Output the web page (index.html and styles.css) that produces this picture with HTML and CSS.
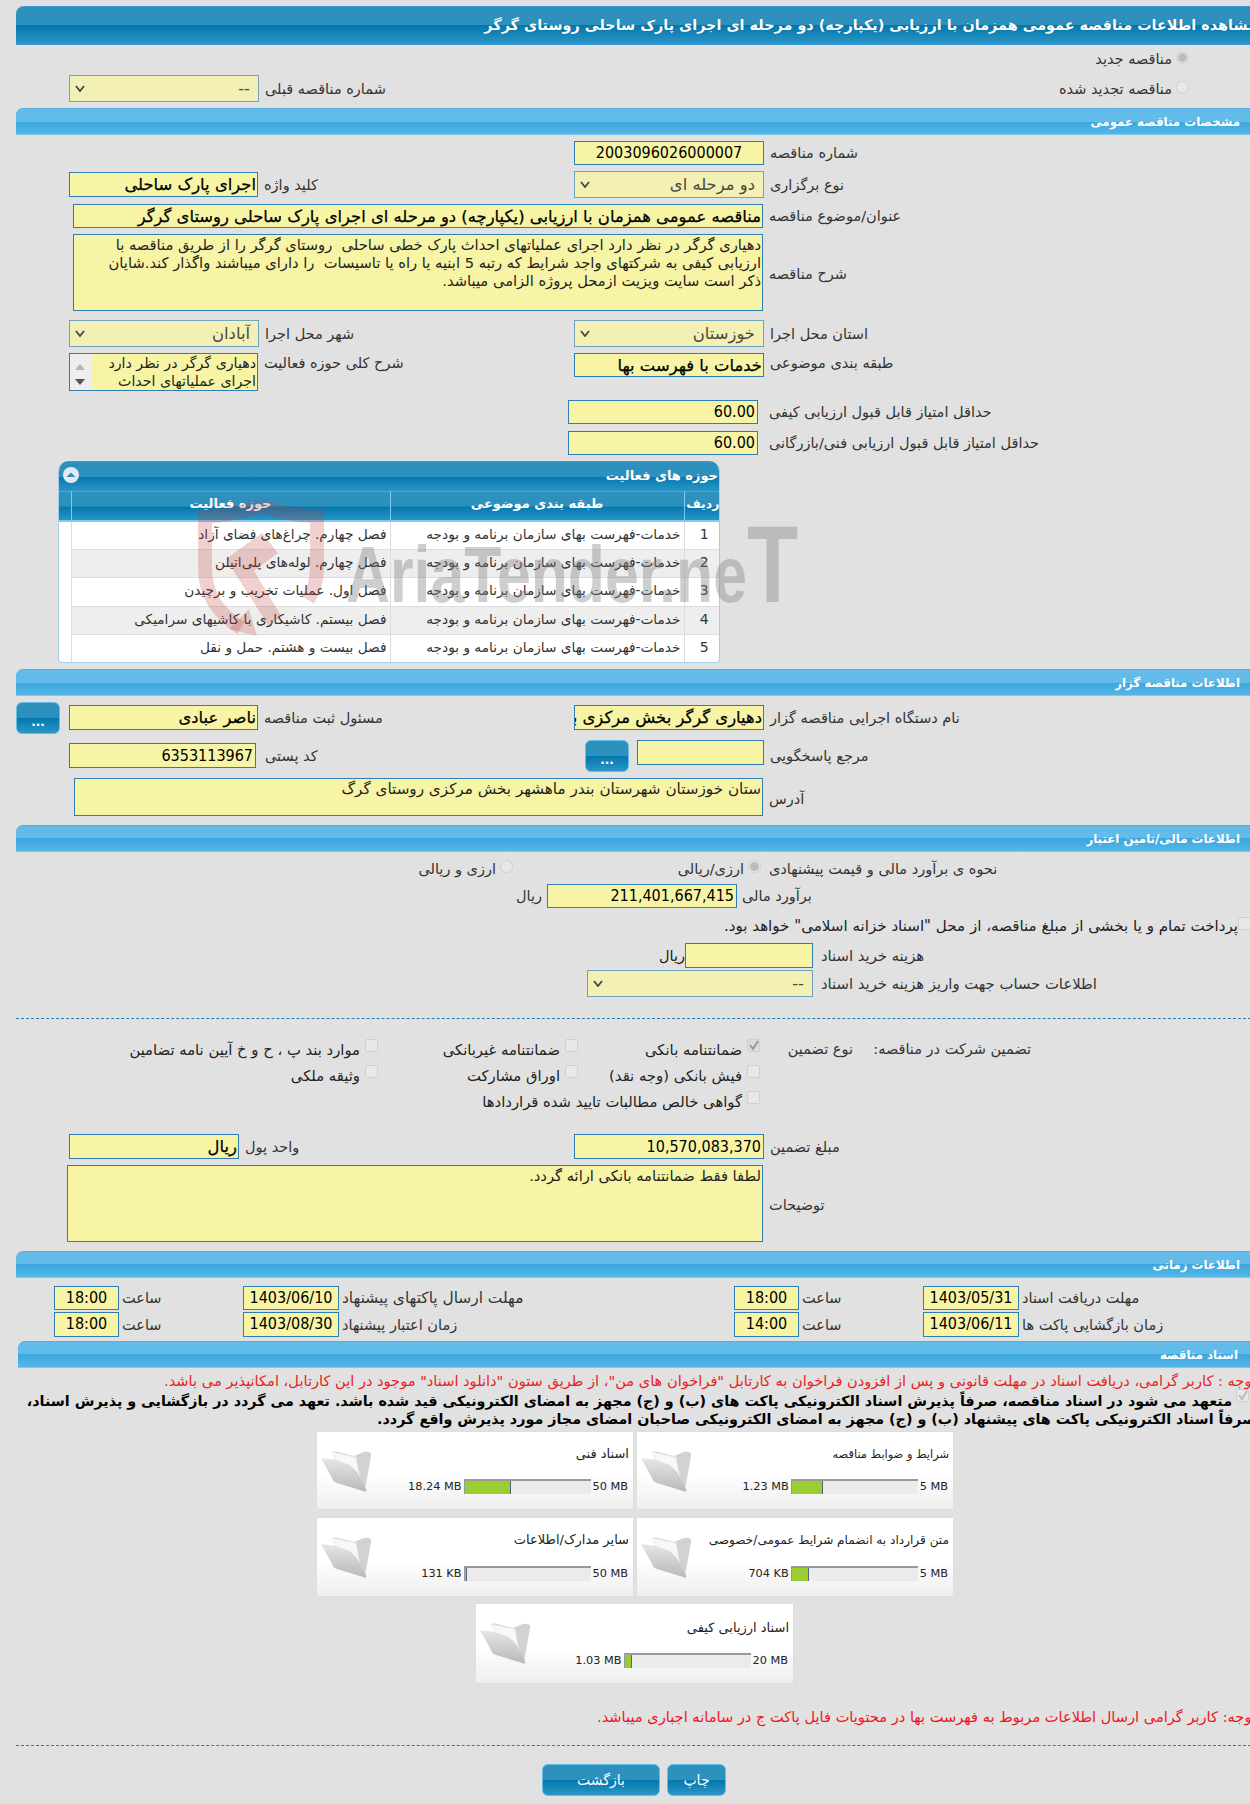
FILE: index.html
```html
<!DOCTYPE html>
<html lang="fa">
<head>
<meta charset="utf-8">
<title>مشاهده اطلاعات مناقصه</title>
<link rel="stylesheet" href="styles.css">
</head>
<body>
<div class="page">
  <div class="title-bar">مشاهده اطلاعات مناقصه عمومی همزمان با ارزیابی (یکپارچه) دو مرحله ای اجرای پارک ساحلی روستای گرگر</div>

  <div class="row h28">
    <div class="col-l"></div>
    <div class="col-r radio-line"><span class="radio on"></span><span class="lbl">مناقصه جدید</span></div>
  </div>
  <div class="row h27 mt2">
    <div class="col-l"><div class="select w190"><i class="chev"><svg viewBox="0 0 10 7" width="10" height="7"><path d="M1 1l4 5 4-5" fill="none" stroke="#444" stroke-width="1.8"/></svg></i><span>--</span></div><span class="lbl">شماره مناقصه قبلی</span></div>
    <div class="col-r radio-line"><span class="radio"></span><span class="lbl">مناقصه تجدید شده</span></div>
  </div>

  <div class="section mt6">مشخصات مناقصه عمومی</div>

  <div class="row h24 mt6">
    <div class="col-l"></div>
    <div class="col-r"><div class="field w190 num center">2003096026000007</div><span class="lbl">شماره مناقصه</span></div>
  </div>
  <div class="row h27 mt6">
    <div class="col-l"><div class="field w189 h25 big">اجرای پارک ساحلی</div><span class="lbl">کلید واژه</span></div>
    <div class="col-r"><div class="select w190"><i class="chev"><svg viewBox="0 0 10 7" width="10" height="7"><path d="M1 1l4 5 4-5" fill="none" stroke="#444" stroke-width="1.8"/></svg></i><span>دو مرحله ای</span></div><span class="lbl">نوع برگزاری</span></div>
  </div>
  <div class="row-wide h24 mt6 ml57">
    <div class="field w690 big">مناقصه عمومی همزمان با ارزیابی (یکپارچه) دو مرحله ای اجرای پارک ساحلی روستای گرگر</div><span class="lbl">عنوان/موضوع مناقصه</span>
  </div>
  <div class="row-wide h77 mt6 ml57">
    <div class="field area w690">دهیاری گرگر در نظر دارد اجرای عملیاتهای احداث پارک خطی ساحلی&nbsp; روستای گرگر را از طریق مناقصه با<br>ارزیابی کیفی به شرکتهای واجد شرایط که رتبه 5 ابنیه یا راه یا تاسیسات&nbsp; را دارای میباشند واگذار کند.شایان<br>ذکر است سایت ویزیت ازمحل پروژه الزامی میباشد.</div><span class="lbl">شرح مناقصه</span>
  </div>
  <div class="row h27 mt9">
    <div class="col-l"><div class="select w190"><i class="chev"><svg viewBox="0 0 10 7" width="10" height="7"><path d="M1 1l4 5 4-5" fill="none" stroke="#444" stroke-width="1.8"/></svg></i><span>آبادان</span></div><span class="lbl">شهر محل اجرا</span></div>
    <div class="col-r"><div class="select w190"><i class="chev"><svg viewBox="0 0 10 7" width="10" height="7"><path d="M1 1l4 5 4-5" fill="none" stroke="#444" stroke-width="1.8"/></svg></i><span>خوزستان</span></div><span class="lbl">استان محل اجرا</span></div>
  </div>
  <div class="row h38 mt6 top">
    <div class="col-l top"><div class="scrollbox w189"><div class="scroll-bar"><i class="up"></i><i class="down"></i></div><div class="scroll-text">دهیاری گرگر در نظر دارد اجرای عملیاتهای احداث</div></div><span class="lbl up4">شرح کلی حوزه فعالیت</span></div>
    <div class="col-r top"><div class="field w190 big">خدمات با فهرست بها</div><span class="lbl up4">طبقه بندی موضوعی</span></div>
  </div>
  <div class="row h24 mt9 left-shift">
    <div class="col-l"></div>
    <div class="col-r"><div class="field w190 num">60.00</div><span class="lbl gap11">حداقل امتیاز قابل قبول ارزیابی کیفی</span></div>
  </div>
  <div class="row h25 mt6 left-shift">
    <div class="col-l"></div>
    <div class="col-r"><div class="field w190 num">60.00</div><span class="lbl gap11">حداقل امتیاز قابل قبول ارزیابی فنی/بازرگانی</span></div>
  </div>

  <div class="panel">
    <div class="panel-head"><span class="collapse"><svg viewBox="0 0 16 16" width="16" height="16"><circle cx="8" cy="8" r="8" fill="#dfeaf1"/><path d="M3.5 10L8 5.500l4.500 4.500z" fill="#2e8fbd"/></svg></span><span>حوزه های فعالیت</span></div>
    <table class="grid">
      <thead><tr><th class="c-idx">ردیف</th><th class="c-cat">طبقه بندی موضوعی</th><th class="c-act">حوزه فعالیت</th><th class="c-end"></th></tr></thead>
      <tbody>
        <tr><td class="c-idx">1</td><td>خدمات-فهرست بهای سازمان برنامه و بودجه</td><td>فصل چهارم. چراغ‌های فضای آزاد</td><td class="c-end"></td></tr>
        <tr><td class="c-idx">2</td><td>خدمات-فهرست بهای سازمان برنامه و بودجه</td><td>فصل چهارم. لوله‌های پلی‌اتیلن</td><td class="c-end"></td></tr>
        <tr><td class="c-idx">3</td><td>خدمات-فهرست بهای سازمان برنامه و بودجه</td><td>فصل اول. عملیات تخریب و برچیدن</td><td class="c-end"></td></tr>
        <tr><td class="c-idx">4</td><td>خدمات-فهرست بهای سازمان برنامه و بودجه</td><td>فصل بیستم. کاشیکاری با کاشیهای سرامیکی</td><td class="c-end"></td></tr>
        <tr><td class="c-idx">5</td><td>خدمات-فهرست بهای سازمان برنامه و بودجه</td><td>فصل بیست و هشتم. حمل و نقل</td><td class="c-end"></td></tr>
      </tbody>
    </table>
  </div>

  <div class="section mt6">اطلاعات مناقصه گزار</div>

  <div class="row h32 mt6 top">
    <div class="col-l flush top"><button class="btn dots">...</button><div class="field w189 h25 big mt3">ناصر عبادی</div><span class="lbl low">مسئول ثبت مناقصه</span></div>
    <div class="col-r top"><div class="field w190 h25 big mt3">دهیاری گرگر بخش مرکزی بندر ماهشهر</div><span class="lbl low">نام دستگاه اجرایی مناقصه گزار</span></div>
  </div>
  <div class="row h32 mt6 top">
    <div class="col-l top"><div class="field w187 h25 num mt3">6353113967</div><span class="lbl low gap10">کد پستی</span></div>
    <div class="col-r top shift-ref"><button class="btn dots">...</button><div class="field w127 h25"></div><span class="lbl low">مرجع پاسخگویی</span></div>
  </div>
  <div class="row-wide h38 mt6 ml58">
    <div class="field area addr w689">ستان خوزستان شهرستان بندر ماهشهر بخش مرکزی روستای گرگ</div><span class="lbl">آدرس</span>
  </div>

  <div class="section mt9">اطلاعات مالی/تامین اعتبار</div>

  <div class="tri h22 mt6">
    <span class="opt"><span class="lbl">ارزی و ریالی</span><span class="radio"></span></span>
    <span class="opt"><span class="lbl">ارزی/ریالی</span><span class="radio on"></span></span>
    <span class="lbl">نحوه ی برآورد مالی و قیمت پیشنهادی</span>
  </div>
  <div class="line h24 mt4">
    <div class="lead lead-531"><span class="lbl">ریال</span></div>
    <div class="field w190 num">211,401,667,415</div>
    <span class="lbl gap5">برآورد مالی</span>
  </div>
  <div class="treasury h24 mt6">
    <span class="check"></span><span class="lbl dark">پرداخت تمام و یا بخشی از مبلغ مناقصه، از محل "اسناد خزانه اسلامی" خواهد بود.</span>
  </div>
  <div class="line h25 mt5">
    <div class="lead lead-669"><span class="lbl dark">ریال</span></div>
    <div class="field w128 h25"></div>
    <span class="lbl gap8">هزینه خرید اسناد</span>
  </div>
  <div class="line h26 mt2">
    <div class="lead lead-571"></div>
    <div class="select w227"><i class="chev"><svg viewBox="0 0 10 7" width="10" height="7"><path d="M1 1l4 5 4-5" fill="none" stroke="#444" stroke-width="1.8"/></svg></i><span>--</span></div>
    <span class="lbl gap8">اطلاعات حساب جهت واریز هزینه خرید اسناد</span>
  </div>

  <div class="divider mt22"></div>

  <div class="guar first">
    <span class="lbl">تضمین شرکت در مناقصه:</span>
    <span class="lbl">نوع تضمین</span>
    <span class="item"><span class="check on"><svg viewBox="0 0 12 12" width="12" height="12"><path d="M2 6l3 4 5-8" fill="none" stroke="#9a9a9a" stroke-width="2"/></svg></span><span class="lbl dark">ضمانتنامه بانکی</span></span>
    <span class="item"><span class="check"></span><span class="lbl dark">ضمانتنامه غیربانکی</span></span>
    <span class="item"><span class="check"></span><span class="lbl dark">موارد بند پ ، ح و خ آیین نامه تضامین</span></span>
  </div>
  <div class="guar">
    <span></span><span></span>
    <span class="item"><span class="check"></span><span class="lbl dark">فیش بانکی (وجه نقد)</span></span>
    <span class="item"><span class="check"></span><span class="lbl dark">اوراق مشارکت</span></span>
    <span class="item"><span class="check"></span><span class="lbl dark">وثیقه ملکی</span></span>
  </div>
  <div class="guar">
    <span></span><span></span>
    <span class="item wide"><span class="check"></span><span class="lbl dark">گواهی خالص مطالبات تایید شده قراردادها</span></span>
  </div>

  <div class="row h25 mt20">
    <div class="col-l"><div class="field w170 h25 big">ریال</div><span class="lbl">واحد پول</span></div>
    <div class="col-r"><div class="field w190 h25 num">10,570,083,370</div><span class="lbl">مبلغ تضمین</span></div>
  </div>
  <div class="row-wide h77 mt6 ml51">
    <div class="field area w696">لطفا فقط ضمانتنامه بانکی ارائه گردد.</div><span class="lbl">توضیحات</span>
  </div>

  <div class="section mt9">اطلاعات زمانی</div>

  <div class="times mt8">
    <span class="field num center">18:00</span><span class="lbl">ساعت</span>
    <span class="field num center">1403/06/10</span><span class="lbl fs15">مهلت ارسال پاکتهای پیشنهاد</span>
    <span class="field num center">18:00</span><span class="lbl">ساعت</span>
    <span class="field num center">1403/05/31</span><span class="lbl">مهلت دریافت اسناد</span>
  </div>
  <div class="times mt2">
    <span class="field num center">18:00</span><span class="lbl">ساعت</span>
    <span class="field num center">1403/08/30</span><span class="lbl">زمان اعتبار پیشنهاد</span>
    <span class="field num center">14:00</span><span class="lbl">ساعت</span>
    <span class="field num center">1403/06/11</span><span class="lbl">زمان بازگشایی پاکت ها</span>
  </div>

  <div class="section docs mt4 ml2">اسناد مناقصه</div>

  <p class="note red1">توجه : کاربر گرامی، دریافت اسناد در مهلت قانونی و پس از افزودن فراخوان به کارتابل "فراخوان های من"، از طریق ستون "دانلود اسناد" موجود در این کارتابل، امکانپذیر می باشد.</p>
  <div class="pledge"><span class="check pledge-check"><svg viewBox="0 0 12 12" width="12" height="12"><path d="M2 6l3 4 5-8" fill="none" stroke="#bbb" stroke-width="2"/></svg></span>متعهد می شود در اسناد مناقصه، صرفاً پذیرش اسناد الکترونیکی پاکت های (ب) و (ج) مجهز به امضای الکترونیکی قید شده باشد. تعهد می گردد در بازگشایی و پذیرش اسناد،<br>صرفاً اسناد الکترونیکی پاکت های پیشنهاد (ب) و (ج) مجهز به امضای الکترونیکی صاحبان امضای مجاز مورد پذیرش واقع گردد.</div>

  <div class="cards r1">
    <div class="card"><svg class="folder" viewBox="0 0 52 46"><use href="#folder"/></svg><div class="c-body"><div class="c-title">اسناد فنی</div><div class="c-bar"><span class="c-max">50 MB</span><span class="track"><i class="fill" style="width:37%"></i></span><span class="c-val">18.24 MB</span></div></div></div>
    <div class="card"><svg class="folder" viewBox="0 0 52 46"><use href="#folder"/></svg><div class="c-body"><div class="c-title tight">شرایط و ضوابط مناقصه</div><div class="c-bar"><span class="c-max">5 MB</span><span class="track"><i class="fill" style="width:25%"></i></span><span class="c-val">1.23 MB</span></div></div></div>
  </div>
  <div class="cards r2">
    <div class="card"><svg class="folder" viewBox="0 0 52 46"><use href="#folder"/></svg><div class="c-body"><div class="c-title">سایر مدارک/اطلاعات</div><div class="c-bar"><span class="c-max">50 MB</span><span class="track"><i class="fill" style="width:2%"></i></span><span class="c-val">131 KB</span></div></div></div>
    <div class="card"><svg class="folder" viewBox="0 0 52 46"><use href="#folder"/></svg><div class="c-body"><div class="c-title snug">متن قرارداد به انضمام شرایط عمومی/خصوصی</div><div class="c-bar"><span class="c-max">5 MB</span><span class="track"><i class="fill" style="width:14%"></i></span><span class="c-val">704 KB</span></div></div></div>
  </div>
  <div class="cards r3">
    <div class="card"><svg class="folder" viewBox="0 0 52 46"><use href="#folder"/></svg><div class="c-body"><div class="c-title">اسناد ارزیابی کیفی</div><div class="c-bar"><span class="c-max">20 MB</span><span class="track"><i class="fill" style="width:6%"></i></span><span class="c-val">1.03 MB</span></div></div></div>
  </div>

  <p class="note red2">توجه: کاربر گرامی ارسال اطلاعات مربوط به فهرست بها در محتویات فایل پاکت ج در سامانه اجباری میباشد.</p>

  <div class="divider end"></div>

  <div class="actions">
    <button class="btn action back">بازگشت</button>
    <button class="btn action print">چاپ</button>
  </div>
</div>

<div class="watermark">
  <svg class="wm-shield" viewBox="0 0 130 150">
    <path d="M65 9C45 16 25 19 9 19v52c0 28 14 46 36 60M65 9c20 7 40 10 56 10v52c0 12-3 22-9 32" fill="none" stroke="#c43a3a" stroke-opacity=".24" stroke-width="14"/>
    <path d="M30 62L66 36l16 20-24 18 28 46-14 8zM33 132l28 7-8-27z" fill="#c43a3a" fill-opacity=".24"/>
  </svg>
  <span class="wm-text">AriaTender.ne<b>T</b></span>
</div>

<svg class="defs" width="0" height="0" aria-hidden="true">
  <defs>
    <linearGradient id="fg" x1="0" y1="0" x2="0" y2="1"><stop offset="0" stop-color="#e6e6e6"/><stop offset="1" stop-color="#b9b9b9"/></linearGradient>
    <g id="folder">
      <path d="M14 3L34 8l10-4c4-1 8 0 7 4L45 42z" fill="#d2d2d2"/>
      <path d="M12 4l24 5 4 21-20-10z" fill="#f8f8f8" stroke="#e2e2e2" stroke-width=".7"/>
      <path d="M1 10l15 2 14 5 7 7 9 17c1 3-1 3-3 2L17 35c-3-1-4-2-5-5z" fill="url(#fg)"/>
    </g>
  </defs>
</svg>
</body>
</html>
```
FILE: styles.css
```css
* { box-sizing: border-box; }
html, body { margin: 0; padding: 0; }
body {
  position: relative;
  width: 1250px;
  height: 1804px;
  overflow: hidden;
  background: #e1e1e1;
  font-family: "DejaVu Sans", sans-serif;
  font-size: 14.5px;
  color: #333;
}
.page { width: 1244px; margin-left: 16px; padding-top: 6px; }

.mt2 { margin-top: 2px; } .mt3 { margin-top: 3px; } .mt4 { margin-top: 4px; } .mt5 { margin-top: 5px; }
.mt6 { margin-top: 6px; } .mt8 { margin-top: 8px; } .mt9 { margin-top: 9px; } .mt20 { margin-top: 20px; } .mt22 { margin-top: 22px; }
.ml2 { margin-left: 2px; }
.h22 { height: 22px; } .h24 { height: 24px; } .h25 { height: 25px; } .h26 { height: 26px; } .h27 { height: 27px; }
.h28 { height: 28px; } .h32 { height: 32px; } .h38 { height: 38px; } .h77 { height: 77px; }

.title-bar {
  height: 39px;
  line-height: 36px;
  padding-right: 3px;
  direction: rtl;
  white-space: nowrap;
  color: #fff;
  font-size: 14.4px;
  font-weight: bold;
  border-top: 1px solid #3c98dd;
  border-bottom: 1px solid #3c98dd;
  border-top-left-radius: 8px;
  background: linear-gradient(#2e90bd 0, #2e90bd 50%, #0277ae 50%, #2c96c5 100%);
  text-shadow: 0 0 1px #0a5f88;
}
.section {
  height: 27px;
  line-height: 26px;
  padding-right: 20px;
  direction: rtl;
  white-space: nowrap;
  color: #fff;
  font-size: 11.8px;
  font-weight: bold;
  border-top: 1px solid #4fb0e6;
  border-bottom: 1px solid #7ccbf2;
  border-top-left-radius: 7px;
  background: linear-gradient(#62bbe9 0, #62bbe9 50%, #3ba7de 50%, #55b6e8 100%);
}
.section.docs { padding-right: 22px; }

.row { display: grid; grid-template-columns: 558px 1fr; align-items: center; }
.row.top { align-items: start; }
.row.left-shift .col-r { margin-left: -6px; }
.col-l, .col-r { display: flex; align-items: center; height: 100%; }
.col-l.top, .col-r.top { align-items: flex-start; }
.col-l { padding-left: 53px; }
.col-l.flush { padding-left: 0; }
.col-l.flush .btn { margin-right: 9px; }
.col-r.shift-ref { margin-left: 11px; }
.col-r.shift-ref .btn { margin-right: 8px; }
.radio-line { justify-content: flex-end; padding-right: 71px; }
.radio-line .lbl { margin: 0; order: 1; }
.radio-line .radio { order: 2; margin-left: 4px; margin-top: -3px; }

.row-wide { display: flex; align-items: center; }
.ml57 { margin-left: 57px; } .ml58 { margin-left: 58px; } .ml51 { margin-left: 51px; }
.field.area + .lbl { margin-top: 3px; }

.lbl { margin-left: 6px; white-space: nowrap; direction: rtl; color: #333; }
.lbl.dark { color: #222; }
.lbl.up4 { margin-top: 2px; }
.lbl.low { margin-top: 8px; }
.lbl.gap5 { margin-left: 5px; }
.lbl.gap8 { margin-left: 8px; font-size: 14.8px; }
.lbl.gap10 { margin-left: 9px; }
.lbl.gap11 { margin-left: 11px; }
.lbl.fs15 { font-size: 15.400px; }

.field {
  display: block;
  height: 24px;
  line-height: 22px;
  padding: 0 1px;
  direction: rtl;
  white-space: nowrap;
  overflow: hidden;
  background: #f7f5a5;
  border: 1px solid #2d7fb3;
  color: #000;
  flex: none;
}
.w127 { width: 127px; } .w128 { width: 128px; } .w170 { width: 170px; } .w187 { width: 187px; } .w189 { width: 189px; } .w190 { width: 190px; } .w227 { width: 226px; }
.w689 { width: 689px; } .w690 { width: 690px; } .w696 { width: 696px; }
.field.h25 { height: 25px; line-height: 23px; }
.field.num { font-family: "DejaVu Sans Condensed", "DejaVu Sans", sans-serif; font-size: 16px; text-align: right; direction: ltr; padding-right: 2px; }
.field.center { text-align: center; padding: 0; }
.field.big { font-size: 16.4px; line-height: 24px; -webkit-text-stroke: .25px #000; }
.field.area { height: 100%; white-space: normal; line-height: 18px; padding: 1px; color: #222; font-size: 14.7px; }
.field.addr { font-size: 15.2px; white-space: nowrap; }

.select {
  display: flex;
  justify-content: space-between;
  align-items: center;
  height: 27px;
  padding: 0 8px 0 5px;
  border: 1px solid #6fa3bd;
  background: #f2f0b5;
  color: #4a4a3a;
  font-size: 16.4px;
  flex: none;
}
.select span { direction: rtl; }
.chev { display: flex; font-style: normal; }

.radio, .check {
  display: inline-block;
  flex: none;
  width: 13px;
  height: 13px;
  background: #e8e8e8;
  border: 1px solid #cfcfcf;
}
.radio { border-radius: 50%; }
.radio.on { background: radial-gradient(circle, #bdbdbd 0 4px, #e8e8e8 5px); }
.check { border-radius: 2px; }
.check svg { display: block; margin: -1px; }
.check.on { background: #dcdcdc; }

.scrollbox { display: flex; height: 38px; border: 1px solid #2d7fb3; background: #f7f5a5; flex: none; overflow: hidden; }
.scroll-bar { position: relative; flex: none; width: 21px; background: #eee; }
.scroll-bar .up { position: absolute; left: 5px; top: 10px; border: 5px solid transparent; border-top: 0; border-bottom: 6px solid #b5b5b5; }
.scroll-bar .down { position: absolute; left: 5px; top: 25px; border: 5px solid transparent; border-bottom: 0; border-top: 6px solid #555; }
.scroll-text { flex: 1; direction: rtl; padding: 0 1px; font-size: 14.2px; line-height: 18px; color: #222; }

.panel { width: 662px; height: 202px; margin: 6px 0 0 42px; background: #fff; border: 1px solid #a8cde6; border-top: 0; border-radius: 10px 10px 4px 4px; overflow: hidden; }
.panel-head { display: flex; justify-content: space-between; align-items: center; height: 30px; padding: 0 1px 3px 4px; color: #fff; font-size: 13px; font-weight: bold; border-top: 1px solid #3c98dd; background: linear-gradient(#2e90bd 0, #2e90bd 50%, #0277ae 50%, #2c96c5 100%); }
.collapse { display: flex; }
.grid { width: 100%; height: 171px; border-collapse: collapse; direction: rtl; table-layout: fixed; }
.grid th { height: 29px; color: #fff; font-size: 13px; font-weight: bold; border-left: 1px solid #7ccbf2; border-top: 1px solid #4ba8dc; border-bottom: 2px solid #7ccbf2; background: linear-gradient(#2e90bd 0, #2e90bd 50%, #0277ae 50%, #2c96c5 100%); padding: 0 0 4px; }
.grid td { padding: 0 3px 3px; height: 28.500px; border-left: 1px solid #ddd; border-bottom: 1px solid #ddd; font-size: 13.7px; color: #333; white-space: nowrap; }
.grid tr:nth-child(even) td { background: #eee; }
.grid td.c-end, .grid th.c-end { border-left: 0; }
.grid tr:nth-child(even) td.c-end { background: #fff; }
.grid td.c-end { border-bottom: 0; }
.c-idx { width: 37px; text-align: center; }
.grid td.c-idx { text-align: center; font-size: 14px; padding: 0 0 3px 3px; }
.c-cat { width: 294px; } .c-act { width: 319px; } .c-end { width: 12px; }
.grid th.c-idx { font-size: 12.5px; }

.btn { display: block; flex: none; border: 1px solid #63bfe6; color: #fff; background: linear-gradient(#2e90bd 0, #2e90bd 50%, #0277ae 50%, #2c96c5 100%); border-radius: 6px; font-family: "DejaVu Sans", sans-serif; padding: 0; }
.btn.dots { width: 44px; height: 32px; font-size: 12px; font-weight: bold; padding-top: 8px; }
.btn.action { height: 32px; font-size: 14px; }
.back { width: 118px; } .print { width: 59px; }
.actions { display: flex; gap: 7px; margin: 18px 0 0 526px; }

.tri { display: grid; grid-template-columns: 497px 248px 1fr; align-items: center; }
.tri > .lbl { margin-left: 8px; justify-self: start; }
.opt { display: flex; justify-content: flex-end; align-items: center; }
.opt .lbl { margin: 0 4px 0 0; }
.opt .radio { margin-top: -6px; }

.line { display: flex; align-items: center; }
.lead { display: flex; justify-content: flex-end; flex: none; }
.lead .lbl { margin: 0 5px 0 0; }
.lead-669 .lbl { margin-right: 0; }
.lead-531 { width: 531px; } .lead-669 { width: 669px; } .lead-571 { width: 571px; }

.treasury { display: flex; direction: rtl; align-items: center; padding-right: 9px; }
.treasury .check { margin-top: -6px; }
.treasury .lbl { margin: 0; font-size: 15.1px; }

.divider { height: 1px; border-top: 1px dashed #2a7db0; width: 1240px; }
.divider.end { margin-top: 19px; }

.guar { display: grid; direction: rtl; grid-template-columns: 178px 93px 182px 200px 1fr; padding-right: 229px; height: 26px; align-items: center; }
.guar.first { margin-top: 17px; }
.guar > .lbl { margin: 0; }
.item { display: flex; align-items: center; }
.item .check { margin-top: -8px; }
.item .lbl { margin: 0 5px 0 0; font-size: 14.8px; }
.item.wide { grid-column: span 3; }

.times { display: grid; grid-template-columns: 65px 124px 96px 395px 65px 124px 96px 1fr; margin-left: 38px; align-items: center; height: 24px; }
.times.mt2 { height: 25px; }
.times .field { height: 100%; line-height: 22px; }
.times .lbl { margin-left: 3px; justify-self: start; }

.note { margin: 0; padding-right: 4px; direction: rtl; white-space: nowrap; color: #e8231c; font-size: 14.6px; line-height: 18px; }
.red1 { margin-top: 4px; }
.pledge { direction: rtl; white-space: nowrap; color: #000; font-size: 14.3px; font-weight: bold; line-height: 18px; margin-top: 2px; padding-right: 4px; }
.pledge-check { margin: -3px 7px 0 4px; vertical-align: top; }

.cards { display: flex; gap: 4px; }
.r1 { margin: 4px 0 0 301px; }
.r2 { margin: 9px 0 0 301px; }
.r3 { margin: 8px 0 0 460px; }
.card { display: flex; width: 316px; height: 77px; background: linear-gradient(#fff 0, #fff 55%, #eeeeee 100%); box-shadow: 0 0 1px #ccc; }
.r2 .card { height: 78px; }
.r3 .card { width: 317px; height: 79px; }
.folder { flex: none; width: 52px; height: 46px; margin: 16px 0 0 3px; }
.c-body { flex: 1; direction: rtl; padding-right: 4px; color: #222; }
.c-title { margin-top: 13px; line-height: 18px; height: 18px; white-space: nowrap; font-size: 13px; }
.c-title.tight { font-size: 11.4px; }
.c-title.snug { font-size: 12.1px; }
.r2 .c-title { margin-top: 13px; }
.r3 .c-title { margin-top: 15px; }
.c-bar { display: flex; align-items: center; height: 15px; margin-top: 16px; direction: ltr; justify-content: flex-start; flex-direction: row-reverse; font-size: 11.3px; }
.r2 .c-bar { margin-top: 17px; }
.c-bar span { white-space: nowrap; }
.c-max { margin-left: 2px; margin-right: 1px; }
.c-val { margin-right: 2px; }
.track { display: block; flex: none; width: 127px; height: 15px; background: #ebebeb; border-top: 2px solid #999; border-left: 1px solid #999; }
.track .fill { display: block; height: 100%; background: #9acd32; border-right: 1px solid #567; }

.red2 { margin-top: 25px; color: #f0141b; }

.watermark { position: absolute; left: 0; top: 0; width: 0; height: 0; pointer-events: none; }
.wm-shield { position: absolute; left: 196px; top: 497px; width: 130px; height: 150px; }
.wm-text { position: absolute; left: 346px; top: 514px; white-space: nowrap; font-family: "Liberation Sans", sans-serif; font-weight: bold; font-size: 80px; line-height: 100px; color: rgba(125,125,125,.38); transform-origin: left center; transform: scaleX(.76); direction: ltr; }
.wm-text b { font-size: 110px; }
.defs { position: absolute; }
```
